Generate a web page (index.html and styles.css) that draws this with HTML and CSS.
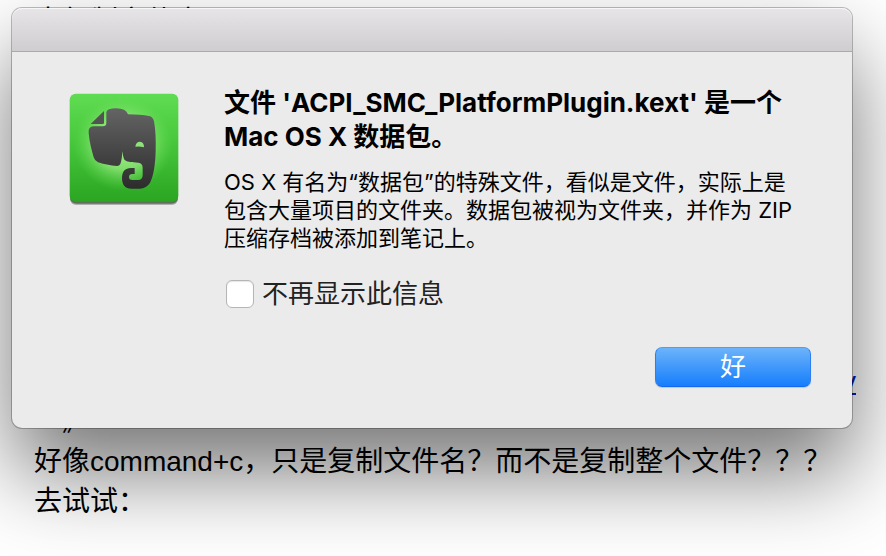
FILE: index.html
```html
<!DOCTYPE html>
<html lang="zh-CN">
<head>
  <meta charset="UTF-8">
  <meta name="viewport" content="width=device-width, initial-scale=1.0">
  <title>Evernote</title>
  <link rel="stylesheet" href="styles.css">
</head>
<body>

  <main class="note">
    <p>去复制文件夹</p>
    <p class="link-line"><a href="#">y</a></p>
    <p>　》</p>
    <p>好像command+c，只是复制文件名？而不是复制整个文件？？？</p>
    <p>去试试：</p>
  </main>

  <div class="dialog" role="alertdialog" aria-labelledby="dialogTitle" aria-describedby="dialogText">
    <div class="titlebar"></div>
    <div class="content">
      <svg class="app-icon" viewBox="42 39 330 336" aria-hidden="true">
        <defs>
          <linearGradient id="tile" x1="0" y1="0" x2="0" y2="1">
            <stop offset="0" stop-color="#60dc52"/>
            <stop offset="0.4" stop-color="#4aca3e"/>
            <stop offset="1" stop-color="#2ba522"/>
          </linearGradient>
          <radialGradient id="glow">
            <stop offset="0" stop-color="#b4f59c" stop-opacity="0.95"/>
            <stop offset="0.55" stop-color="#9cec84" stop-opacity="0.7"/>
            <stop offset="1" stop-color="#60dc52" stop-opacity="0"/>
          </radialGradient>
          <linearGradient id="head" x1="0" y1="0" x2="0" y2="1">
            <stop offset="0" stop-color="#646464"/>
            <stop offset="1" stop-color="#2c2c2c"/>
          </linearGradient>
        </defs>
        <rect x="45" y="50" width="324" height="325" rx="18" fill="#000" opacity="0.25"/>
        <rect x="45" y="46" width="324" height="325" rx="18" fill="#5c705a"/>
        <rect x="44" y="41" width="326" height="324" rx="18" fill="url(#tile)"/>
        <ellipse cx="204" cy="190" rx="150" ry="142" fill="url(#glow)"/>
        <path fill="#535353" d="M147 93 V128 Q147 132 143 132 H107 Z"/>
        <path fill="url(#head)" d="M154 97 Q155 85 184 85 Q213 85 219 103 C244 104 267 105 282 108 Q294 110 297 124 C302 150 303 182 302 213 C301 253 296 288 285 308 Q275 325 254 326 H229 C211 326 201 315 201 294 C201 275 210 264 228 264 H239 V282 H232 Q222 282 222 291 Q222 300 232 300 H249 Q263 300 263 285 V263 Q263 249 250 248 C231 247 211 246 207 237 Q204 230 202 214 C201 231 200 242 196 252 Q193 258 186 258 C168 257 142 252 129 247 Q119 243 116 232 C109 208 103 184 101 159 Q99 139 116 139 H144 Q154 139 154 129 Z"/>
        <path fill="#8fe27c" d="M241 200 Q243 185 255 185 Q267 186 267 202 Q254 198 241 200 Z"/>
      </svg>
      <div class="message">
        <h1 id="dialogTitle">文件 'ACPI_SMC_PlatformPlugin.kext' 是一个<br>Mac OS X 数据包。</h1>
        <p id="dialogText">OS X 有名为“数据包”的特殊文件，看似是文件，实际上是<br>包含大量项目的文件夹。数据包被视为文件夹，并作为 ZIP<br>压缩存档被添加到笔记上。</p>
        <label class="suppress"><input type="checkbox">不再显示此信息</label>
        <button type="button">好</button>
      </div>
    </div>
  </div>

</body>
</html>
```
FILE: styles.css
```css
* {
  box-sizing: border-box;
}

body {
  margin: 0;
  background-color: #fff;
  color: #000;
  overflow: hidden;
}

.note {
  padding: 2px 34px 0;
  font-family: "Liberation Sans", "Noto Sans CJK SC", sans-serif;
  font-size: 28px;
  line-height: 40px;
}

.note p {
  margin: 0;
  white-space: nowrap;
}

.note .link-line {
  margin-top: 320px;
  margin-right: -4px;
  text-align: right;
}

.note a {
  color: #0018c8;
}

.dialog {
  position: absolute;
  top: 8px;
  left: 12px;
  right: 34px;
  border-radius: 10px;
  background-color: #ebebeb;
  box-shadow: 0 0 0 1px rgba(0, 0, 0, 0.25), 0 44px 88px rgba(0, 0, 0, 0.54);
  font-family: Inter, "Noto Sans CJK SC", sans-serif;
}

.titlebar {
  height: 44px;
  border-radius: 10px 10px 0 0;
  border-bottom: 1px solid #aba9ab;
  background: linear-gradient(#e8e5e8, #d0cdd0);
  box-shadow: inset 0 1px 0 #f7f6f7;
}

.content {
  display: flex;
  align-items: flex-start;
  gap: 45px;
  padding: 34px 41px 41px 57px;
}

.app-icon {
  flex: none;
  width: 110px;
  height: 112px;
  margin-top: 7px;
}

.message {
  flex: 1;
  display: flex;
  flex-direction: column;
  align-items: flex-start;
}

.message h1 {
  margin: 0;
  font-size: 26px;
  font-weight: bold;
  line-height: 34px;
  white-space: nowrap;
}

.message p {
  margin: 14px 0 0;
  font-size: 22px;
  line-height: 28px;
  white-space: nowrap;
}

.suppress {
  display: flex;
  align-items: center;
  gap: 8px;
  margin-top: 25px;
  padding-left: 2px;
  color: #222;
  font-size: 26px;
  line-height: 34px;
}

.suppress input {
  appearance: none;
  width: 28px;
  height: 28px;
  margin: 0;
  border: 1px solid #b5b5b5;
  border-radius: 6px;
  background-color: #fff;
  box-shadow: inset 0 1px 1px rgba(0, 0, 0, 0.1);
}

.suppress input:checked {
  background-color: #1a82fd;
}

.message button {
  align-self: flex-end;
  width: 156px;
  height: 40px;
  margin-top: 36px;
  padding: 0;
  border: 1px solid;
  border-color: #4e9fee #2c7ff2 #1566f0;
  border-radius: 7px;
  background: linear-gradient(#6cb3fa, #167efc);
  box-shadow: 0 1px 1px rgba(0, 0, 0, 0.15);
  color: #fff;
  font-family: inherit;
  font-size: 26px;
  line-height: 34px;
}
```
